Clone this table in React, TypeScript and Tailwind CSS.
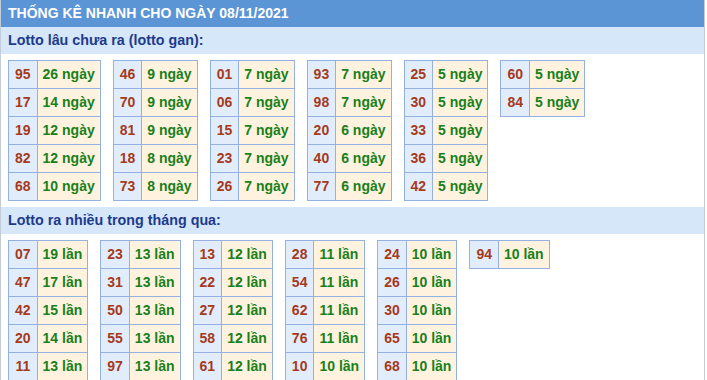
const ganRows: [string, string][][] = [
  [
    ['95', '26 ngày'],
    ['17', '14 ngày'],
    ['19', '12 ngày'],
    ['82', '12 ngày'],
    ['68', '10 ngày'],
  ],
  [
    ['46', '9 ngày'],
    ['70', '9 ngày'],
    ['81', '9 ngày'],
    ['18', '8 ngày'],
    ['73', '8 ngày'],
  ],
  [
    ['01', '7 ngày'],
    ['06', '7 ngày'],
    ['15', '7 ngày'],
    ['23', '7 ngày'],
    ['26', '7 ngày'],
  ],
  [
    ['93', '7 ngày'],
    ['98', '7 ngày'],
    ['20', '6 ngày'],
    ['40', '6 ngày'],
    ['77', '6 ngày'],
  ],
  [
    ['25', '5 ngày'],
    ['30', '5 ngày'],
    ['33', '5 ngày'],
    ['36', '5 ngày'],
    ['42', '5 ngày'],
  ],
  [
    ['60', '5 ngày'],
    ['84', '5 ngày'],
  ],
]

const hotRows: [string, string][][] = [
  [
    ['07', '19 lần'],
    ['47', '17 lần'],
    ['42', '15 lần'],
    ['20', '14 lần'],
    ['11', '13 lần'],
  ],
  [
    ['23', '13 lần'],
    ['31', '13 lần'],
    ['50', '13 lần'],
    ['55', '13 lần'],
    ['97', '13 lần'],
  ],
  [
    ['13', '12 lần'],
    ['22', '12 lần'],
    ['27', '12 lần'],
    ['58', '12 lần'],
    ['61', '12 lần'],
  ],
  [
    ['28', '11 lần'],
    ['54', '11 lần'],
    ['62', '11 lần'],
    ['76', '11 lần'],
    ['10', '10 lần'],
  ],
  [
    ['24', '10 lần'],
    ['26', '10 lần'],
    ['30', '10 lần'],
    ['65', '10 lần'],
    ['68', '10 lần'],
  ],
  [['94', '10 lần']],
]

function StatTable({ rows }: { rows: [string, string][] }) {
  return (
    <table className="border-collapse">
      <tbody>
        {rows.map(([num, val]) => (
          <tr key={num}>
            <td className="h-[28px] border border-[#93b2e2] bg-[#e2edfc] px-[6px] py-0 text-center text-[#a53a1c]">
              {num}
            </td>
            <td className="h-[28px] border border-[#93b2e2] bg-[#fff3df] px-[5px] py-0 text-[#19801b]">
              {val}
            </td>
          </tr>
        ))}
      </tbody>
    </table>
  )
}

export default function App() {
  return (
    <div className="h-[380px] w-[707px] bg-white font-['Liberation_Sans',Arial,sans-serif] text-[14px] font-bold">
      <div className="w-[705px] border-x border-[#c3ccd8]">
        <div className="flex h-[27px] items-center bg-[#5b95d6] px-[7px] text-[14px] text-white">
          THỐNG KÊ NHANH CHO NGÀY 08/11/2021
        </div>
        <div className="flex h-[27px] items-center bg-[#d6e7f9] px-[7px] text-[14.3px] text-[#1d3a8c]">
          Lotto lâu chưa ra (lotto gan):
        </div>
        <div className="flex items-start gap-[12px] px-[7px] py-[6px]">
          {ganRows.map((rows, i) => (
            <StatTable key={i} rows={rows} />
          ))}
        </div>
        <div className="flex h-[27px] items-center bg-[#d6e7f9] px-[7px] text-[14.3px] text-[#1d3a8c]">
          Lotto ra nhiều trong tháng qua:
        </div>
        <div className="flex items-start gap-[12px] px-[7px] pt-[6px]">
          {hotRows.map((rows, i) => (
            <StatTable key={i} rows={rows} />
          ))}
        </div>
      </div>
    </div>
  )
}
